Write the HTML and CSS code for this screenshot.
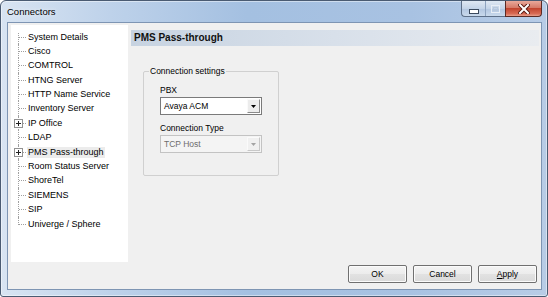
FILE: index.html
```html
<!DOCTYPE html>
<html lang="en">
<head>
    <meta charset="UTF-8">
    <title>Connectors</title>
    <link rel="stylesheet" href="styles.css">
</head>
<body>
    <div class="window">
        <div class="titlebar">
            <span class="title">Connectors</span>
            <div class="caption-btns">
                <div class="cap-group">
                    <span class="cap-btn cap-min">
                        <svg width="10" height="5" viewBox="0 0 10 5"><rect x="0.5" y="0.5" width="9" height="4" fill="#fff" stroke="#3b4a5e"/></svg>
                    </span>
                    <span class="cap-btn cap-max">
                        <svg width="9" height="8" viewBox="0 0 9 8"><rect x="0.5" y="0.5" width="8" height="7" fill="none" stroke="#e8eef6"/><rect x="2.5" y="2.5" width="4" height="3" fill="none" stroke="#b8c8dc"/></svg>
                    </span>
                </div>
                <span class="cap-btn cap-close">
                    <svg width="12" height="10" viewBox="0 0 12 10"><path d="M2 1 L10 9 M10 1 L2 9" stroke="#5a1a12" stroke-width="4" stroke-linecap="square"/><path d="M2 1 L10 9 M10 1 L2 9" stroke="#fff" stroke-width="2" stroke-linecap="square"/></svg>
                </span>
            </div>
        </div>

        <div class="client">
            <div class="main">
                <!-- Connector tree -->
                <ul class="tree">
                    <li class="first">System Details</li>
                    <li>Cisco</li>
                    <li>COMTROL</li>
                    <li>HTNG Server</li>
                    <li>HTTP Name Service</li>
                    <li>Inventory Server</li>
                    <li><span class="expander"><svg width="7" height="7" viewBox="0 0 7 7"><path d="M1 3.5 H6 M3.5 1 V6" stroke="#222" stroke-width="1"/></svg></span>IP Office</li>
                    <li>LDAP</li>
                    <li class="selected"><span class="expander"><svg width="7" height="7" viewBox="0 0 7 7"><path d="M1 3.5 H6 M3.5 1 V6" stroke="#222" stroke-width="1"/></svg></span><span class="label">PMS Pass-through</span></li>
                    <li>Room Status Server</li>
                    <li>ShoreTel</li>
                    <li>SIEMENS</li>
                    <li>SIP</li>
                    <li>Univerge / Sphere</li>
                </ul>

                <div class="panel">
                    <div class="panel-header">PMS Pass-through</div>
                    <fieldset class="group">
                        <legend>Connection settings</legend>
                        <div class="group-body">
                            <div class="field-label">PBX</div>
                            <div class="combo">
                                <span class="combo-text">Avaya ACM</span>
                                <span class="combo-btn"><svg width="5" height="3" viewBox="0 0 5 3"><path d="M0 0 H5 L2.5 3 Z" fill="#000"/></svg></span>
                            </div>
                            <div class="field-label second">Connection Type</div>
                            <div class="combo disabled">
                                <span class="combo-text">TCP Host</span>
                                <span class="combo-btn"><svg width="5" height="3" viewBox="0 0 5 3"><path d="M0 0 H5 L2.5 3 Z" fill="#a3a3a3"/></svg></span>
                            </div>
                        </div>
                    </fieldset>
                </div>
            </div>

            <div class="footer">
                <button class="btn">OK</button>
                <button class="btn">Cancel</button>
                <button class="btn"><u>A</u>pply</button>
            </div>
        </div>
    </div>
</body>
</html>
```

FILE: styles.css
```css
* {
    box-sizing: border-box;
}
body {
    margin: 0;
    font-family: "Liberation Sans", Arial, sans-serif;
    font-size: 9px;
    color: #000;
    background: #fff;
}
.window {
    width: 548px;
    height: 297px;
    border: 1px solid #4a5b72;
    border-radius: 6px 6px 3px 3px;
    background: linear-gradient(to right, #d8e4f2 0%, #bed2ea 20%, #a4c0e1 45%, #a8c2e2 75%, #b8cce6 100%);
    box-shadow: inset 0 0 0 1px rgba(255, 255, 255, 0.45);
    padding: 0 5px 6px 6px;
    display: flex;
    flex-direction: column;
}

/* title bar */
.titlebar {
    height: 21px;
    display: flex;
    justify-content: space-between;
    align-items: flex-start;
}
.title {
    font-size: 9.5px;
    line-height: 22px;
    padding-left: 0;
    text-shadow: 0 0 4px rgba(255, 255, 255, 0.8);
}
.caption-btns {
    display: flex;
    height: 16px;
}
.cap-group {
    display: flex;
    border: 1px solid #5d6f88;
    border-top: none;
    border-right: none;
    border-radius: 0 0 0 4px;
    background: linear-gradient(#dfe8f3, #c4d4e8 50%, #b2c6e0 51%, #c9d9ec);
    overflow: hidden;
}
.cap-btn {
    display: flex;
    align-items: center;
    justify-content: center;
    height: 15px;
}
.cap-min {
    width: 24px;
    padding-top: 5px;
    border-right: 1px solid #8ea3bf;
}
.cap-max {
    width: 19px;
}
.cap-close {
    width: 37px;
    height: 16px;
    border: 1px solid #5b2a24;
    border-top: none;
    border-radius: 0 0 4px 0;
    background: linear-gradient(#e9a99b, #d57a68 45%, #c2452f 50%, #d86b55 85%, #e8a08c);
}

/* client area */
.client {
    flex: 1;
    border: 1px solid #7e95b3;
    background: #f0f0f0;
    display: flex;
    flex-direction: column;
}
.main {
    display: flex;
    gap: 3px;
    height: 239px;
    padding: 2px 2px 0 3px;
}

/* tree */
.tree {
    width: 117px;
    margin: 0;
    padding: 4.5px 0 0 0;
    list-style: none;
    background: #fff;
}
.tree li {
    position: relative;
    height: 14.4px;
    line-height: 14.4px;
    padding-left: 17px;
    white-space: nowrap;
}
.tree li::before {
    content: "";
    position: absolute;
    left: 8px;
    top: 7px;
    width: 7px;
    border-top: 1px dotted #a0a0a0;
}
.tree li::after {
    content: "";
    position: absolute;
    left: 7px;
    top: 0;
    bottom: 0;
    border-left: 1px dotted #a0a0a0;
}
.tree li.first::after {
    top: 3px;
}
.tree li:last-child::after {
    bottom: auto;
    height: 8px;
}
.expander {
    position: absolute;
    left: 3px;
    top: 3px;
    width: 9px;
    height: 9px;
    border: 1px solid #929292;
    background: #fff;
    z-index: 1;
    display: flex;
}
.tree li.selected .label {
    display: inline-block;
    line-height: 11px;
    padding: 0 1px;
    margin-left: -1px;
    background: #ececec;
}

/* right panel */
.panel {
    flex: 1;
    padding-top: 5px;
}
.panel-header {
    height: 16px;
    line-height: 16px;
    padding-left: 3px;
    font-size: 10px;
    font-weight: bold;
    color: #111;
    background: linear-gradient(to right, #c7d3e1 0%, #d8e0ea 50%, #e9ecf0 100%);
}
.group {
    width: 136px;
    height: 110px;
    margin: 20px 0 0 12px;
    padding: 0;
    border: 1px solid #d0d0d0;
    border-radius: 2px;
}
.group legend {
    margin-left: 5px;
    padding: 0 1px;
    line-height: 11px;
    font-size: 8.5px;
}
.group-body {
    padding: 7px 0 0 16px;
}
.field-label {
    font-size: 8.5px;
    line-height: 12px;
    margin-bottom: 1px;
}
.field-label.second {
    margin-top: 7px;
}
.combo {
    display: flex;
    width: 102px;
    height: 18px;
    padding: 1px;
    border: 1px solid #7a7a7a;
    background: #fff;
}
.combo-text {
    flex: 1;
    padding-left: 2px;
    line-height: 14px;
    font-size: 8.5px;
}
.combo-btn {
    width: 13px;
    display: flex;
    align-items: center;
    justify-content: center;
    border: 1px solid;
    border-color: #fafafa #8a8a8a #8a8a8a #fafafa;
    background: #ececec;
}
.combo.disabled {
    border-color: #c3c3c3;
    background: #f4f4f4;
    color: #6d6d6d;
}
.combo.disabled .combo-btn {
    border-color: #fafafa #c8c8c8 #c8c8c8 #fafafa;
    background: #f0f0f0;
}

/* dialog buttons */
.footer {
    display: flex;
    justify-content: flex-end;
    gap: 6px;
    padding: 3px 4px 0 0;
}
.btn {
    width: 59px;
    height: 18px;
    padding: 0;
    font-family: "Liberation Sans", Arial, sans-serif;
    font-size: 8.5px;
    color: #000;
    border: 1px solid #707070;
    border-radius: 2px;
    background: linear-gradient(#f4f4f4, #ececec 50%, #e2e2e2 51%, #dadada);
    box-shadow: inset 0 0 0 1px #fbfbfb;
}
```
